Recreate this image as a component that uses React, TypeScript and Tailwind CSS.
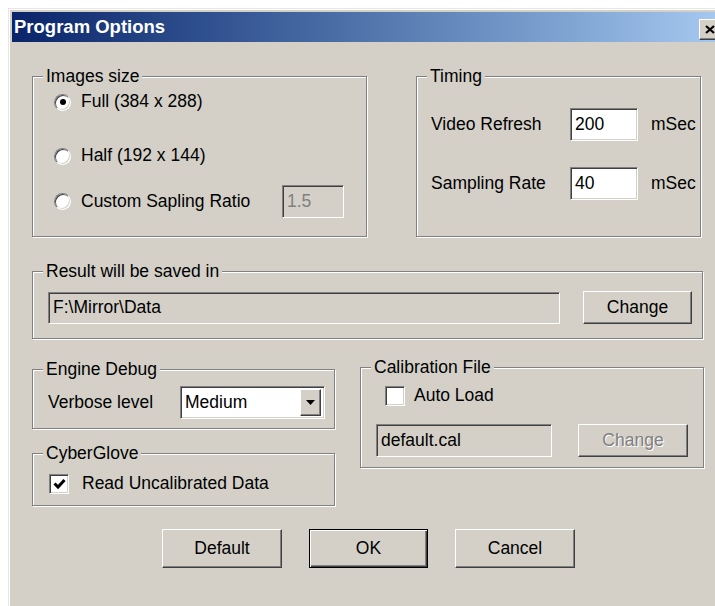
import React from "react";

const font = "font-['Liberation_Sans',Arial,sans-serif]";
const raised =
  "bg-[#d4d0c8] border border-t-white border-l-white border-b-[#404040] border-r-[#404040] shadow-[inset_-1px_-1px_0_#808080]";
const sunken =
  "border border-t-[#808080] border-l-[#808080] border-b-white border-r-white shadow-[inset_1px_1px_0_#404040,inset_-1px_-1px_0_#d4d0c8]";

function Group({
  title,
  className,
  children,
}: {
  title: string;
  className: string;
  children: React.ReactNode;
}) {
  return (
    <fieldset
      className={`border border-[#808080] shadow-[inset_1px_1px_0_#fff,1px_1px_0_#fff] ${className}`}
    >
      <legend className="ml-[10px] px-[3px] bg-[#d4d0c8] leading-[20px]">{title}</legend>
      {children}
    </fieldset>
  );
}

function Radio({ checked }: { checked?: boolean }) {
  return (
    <span
      className={`w-[17px] h-[17px] rounded-full bg-white flex items-center justify-center shrink-0 ${sunken}`}
    >
      {checked && <span className="w-[6px] h-[6px] rounded-full bg-black" />}
    </span>
  );
}

function Check({ checked }: { checked?: boolean }) {
  return (
    <span className={`w-[20px] h-[20px] bg-white flex items-center justify-center shrink-0 ${sunken}`}>
      {checked && (
        <svg width="13" height="12" viewBox="0 0 13 12">
          <path d="M1.5 5.5 L5 9 L11.5 2" fill="none" stroke="#000" strokeWidth="3" />
        </svg>
      )}
    </span>
  );
}

function Field({
  value,
  className,
  disabled,
  gray,
}: {
  value: string;
  className: string;
  disabled?: boolean;
  gray?: boolean;
}) {
  return (
    <div
      className={`flex items-center pl-[4px] ${sunken} ${gray || disabled ? "bg-[#d4d0c8]" : "bg-white"} ${
        disabled ? "text-[#808080]" : "text-black"
      } ${className}`}
    >
      {value}
    </div>
  );
}

function Button({
  label,
  className,
  disabled,
  isDefault,
}: {
  label: string;
  className: string;
  disabled?: boolean;
  isDefault?: boolean;
}) {
  const frame = isDefault
    ? "bg-[#d4d0c8] border border-black shadow-[inset_1px_1px_0_#fff,inset_-1px_-1px_0_#404040,inset_-2px_-2px_0_#808080]"
    : raised;
  return (
    <button
      className={`flex items-center justify-center ${frame} ${
        disabled ? "text-[#808080] [text-shadow:1px_1px_0_#fff]" : "text-black"
      } ${className}`}
    >
      {label}
    </button>
  );
}

export default function App() {
  return (
    <div className={`h-screen overflow-hidden bg-white pt-[8px] pl-[8px] text-[17.5px] leading-none ${font}`}>
      <div className="w-[740px] h-[640px] bg-[#d4d0c8] pt-[4px] pl-[4px] shadow-[inset_1px_1px_0_#e8e6e1,inset_2px_2px_0_#fff]">
        <div className="w-[712px] h-[30px] flex items-start bg-gradient-to-r from-[#0a246a] to-[#a6caf0]">
          <span className="pl-[2px] mt-[6px] text-white font-bold text-[18.5px]">Program Options</span>
          <span className={`ml-auto mr-[4px] mt-[7px] w-[21px] h-[21px] flex items-center justify-center ${raised}`}>
            <svg width="10" height="9" viewBox="0 0 10 9">
              <path d="M1 1 L9 8 M9 1 L1 8" stroke="#000" strokeWidth="2.2" />
            </svg>
          </span>
        </div>

        <div className="pl-[20px] pt-[24px]">
          <div className="flex">
            <Group title="Images size" className="w-[335px] h-[171px]">
              <div className="flex flex-col pl-[21px] pr-[22px]">
                <div className="h-[32px] flex items-center">
                  <Radio checked />
                  <span className="ml-[10px]">Full (384 x 288)</span>
                </div>
                <div className="h-[32px] mt-[22px] flex items-center">
                  <Radio />
                  <span className="ml-[10px]">Half (192 x 144)</span>
                </div>
                <div className="h-[33px] mt-[13px] flex items-center">
                  <Radio />
                  <span className="ml-[10px]">Custom Sapling Ratio</span>
                  <Field value="1.5" disabled className="ml-auto w-[62px] h-[33px]" />
                </div>
              </div>
            </Group>

            <Group title="Timing" className="ml-[49px] w-[285px] h-[171px]">
              <div className="grid grid-cols-[126px_68px_auto] gap-x-[13px] gap-y-[26px] items-center pl-[14px] mt-[22px]">
                <span>Video Refresh</span>
                <Field value="200" className="h-[33px]" />
                <span>mSec</span>
                <span>Sampling Rate</span>
                <Field value="40" className="h-[33px]" />
                <span>mSec</span>
              </div>
            </Group>
          </div>

          <Group title="Result will be saved in" className="mt-[24px] w-[671px] h-[78px]">
            <div className="flex items-center pl-[15px] mt-[10px]">
              <Field value="F:\Mirror\Data" gray className="w-[512px] h-[32px]" />
              <Button label="Change" className="ml-[23px] w-[109px] h-[33px]" />
            </div>
          </Group>

          <div className="flex items-start mt-[18px]">
            <div className="flex flex-col mt-[2px]">
              <Group title="Engine Debug" className="w-[303px] h-[70px]">
                <div className="flex items-center pl-[15px] mt-[7px]">
                  <span className="w-[132px]">Verbose level</span>
                  <div className={`w-[145px] h-[33px] bg-white flex items-center pl-[4px] pr-[3px] ${sunken}`}>
                    <span>Medium</span>
                    <span className={`ml-auto w-[21px] h-[27px] flex items-center justify-center ${raised}`}>
                      <svg width="9" height="5" viewBox="0 0 9 5">
                        <path d="M0 0 H9 L4.5 5 Z" fill="#000" />
                      </svg>
                    </span>
                  </div>
                </div>
              </Group>

              <Group title="CyberGlove" className="mt-[14px] w-[303px] h-[63px]">
                <div className="flex items-center pl-[16px] mt-[11px]">
                  <Check checked />
                  <span className="ml-[13px]">Read Uncalibrated Data</span>
                </div>
              </Group>
            </div>

            <Group title="Calibration File" className="ml-[25px] w-[344px] h-[111px]">
              <div className="flex items-center pl-[24px] mt-[9px]">
                <Check />
                <span className="ml-[9px]">Auto Load</span>
              </div>
              <div className="flex items-center pl-[15px] mt-[18px]">
                <Field value="default.cal" gray className="w-[176px] h-[33px]" />
                <Button label="Change" disabled className="ml-[26px] w-[110px] h-[33px]" />
              </div>
            </Group>
          </div>

          <div className="flex ml-[130px] mt-[23px]">
            <Button label="Default" className="w-[120px] h-[39px]" />
            <Button label="OK" isDefault className="ml-[27px] w-[119px] h-[39px]" />
            <Button label="Cancel" className="ml-[27px] w-[120px] h-[39px]" />
          </div>
        </div>
      </div>
    </div>
  );
}
